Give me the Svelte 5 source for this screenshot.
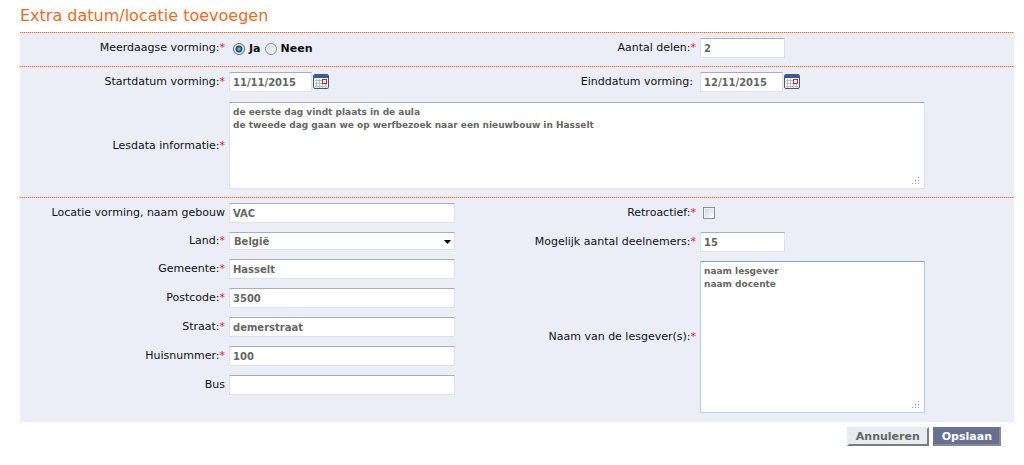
<script>
	let meerdaags = 'ja';
	let delen = '2';
	let start = '11/11/2015';
	let einde = '12/11/2015';
	let lesdata = 'de eerste dag vindt plaats in de aula\nde tweede dag gaan we op werfbezoek naar een nieuwbouw in Hasselt';
	let land = 'België';
	let retroactief = false;
	let deelnemers = '15';
	let lesgevers = 'naam lesgever\nnaam docente';

	let gebouw = 'VAC';
	let adres = [
		{ id: 'gemeente', label: 'Gemeente:', verplicht: true, waarde: 'Hasselt' },
		{ id: 'postcode', label: 'Postcode:', verplicht: true, waarde: '3500' },
		{ id: 'straat', label: 'Straat:', verplicht: true, waarde: 'demerstraat' },
		{ id: 'huisnummer', label: 'Huisnummer:', verplicht: true, waarde: '100' },
		{ id: 'bus', label: 'Bus', verplicht: false, waarde: '' }
	];
</script>

{#snippet kalender(naam)}
	<button type="button" class="kalender" aria-label={naam}>
		<svg width="16" height="16" viewBox="0 0 16 16">
			<rect x="0.5" y="0.5" width="15" height="14" rx="1.5" fill="#fff" stroke="#55525c" />
			<path d="M1 4V2q0-1 1-1h12q1 0 1 1v2z" fill="#2c5fa6" />
			<path d="M2 6.5h12M2 9.5h12M2 12.5h12M3.5 5v9M6.5 5v9M9.5 5v9M12.5 5v9" stroke="#b9bfca" fill="none" />
			<rect x="9.5" y="5.5" width="4" height="4" fill="#fff" stroke="#d8202a" />
		</svg>
	</button>
{/snippet}

{#snippet greep()}
	<svg class="greep" width="8" height="8" viewBox="0 0 8 8">
		<path d="M6 0h1v1h-1zM3 3h1v1h-1zM6 3h1v1h-1zM0 6h1v1h-1zM3 6h1v1h-1zM6 6h1v1h-1z" />
	</svg>
{/snippet}

<main>
	<h1>Extra datum/locatie toevoegen</h1>
	<form>
		<section>
			<div class="helft">
				<span class="label" id="meerdaags">Meerdaagse vorming:<i>*</i></span>
				<div class="keuze" role="radiogroup" aria-labelledby="meerdaags">
					<label><input type="radio" value="ja" bind:group={meerdaags} /> Ja</label>
					<label><input type="radio" value="neen" bind:group={meerdaags} /> Neen</label>
				</div>
			</div>
			<div class="helft">
				<label class="label" for="delen">Aantal delen:<i>*</i></label>
				<input class="kort" id="delen" type="text" bind:value={delen} />
			</div>
		</section>

		<section>
			<div class="helft">
				<label class="label" for="start">Startdatum vorming:<i>*</i></label>
				<div class="datum">
					<input class="kort" id="start" type="text" bind:value={start} />
					{@render kalender('Kies startdatum')}
				</div>
			</div>
			<div class="helft">
				<label class="label leeg" for="einde">Einddatum vorming:</label>
				<div class="datum">
					<input class="kort" id="einde" type="text" bind:value={einde} />
					{@render kalender('Kies einddatum')}
				</div>
			</div>
			<div class="breed">
				<label class="label" for="lesdata">Lesdata informatie:<i>*</i></label>
				<div class="tekst">
					<textarea id="lesdata" class="laag" bind:value={lesdata}></textarea>
					{@render greep()}
				</div>
			</div>
		</section>

		<section>
			<div class="helft">
				<label class="label" for="gebouw">Locatie vorming, naam gebouw</label>
				<input id="gebouw" type="text" bind:value={gebouw} />
				<label class="label" for="land">Land:<i>*</i></label>
				<div class="lijst">
					<select id="land" bind:value={land}>
						<option>België</option>
						<option>Nederland</option>
					</select>
					<svg class="pijl" width="7" height="4" viewBox="0 0 7 4"><path d="M0 0h7L3.5 4z" /></svg>
				</div>
				{#each adres as veld}
					<label class="label" for={veld.id}>{veld.label}{#if veld.verplicht}<i>*</i>{/if}</label>
					<input id={veld.id} type="text" bind:value={veld.waarde} />
				{/each}
			</div>
			<div class="helft">
				<label class="label" for="retroactief">Retroactief:<i>*</i></label>
				<input id="retroactief" type="checkbox" bind:checked={retroactief} />
				<label class="label" for="deelnemers">Mogelijk aantal deelnemers:<i>*</i></label>
				<input class="kort" id="deelnemers" type="text" bind:value={deelnemers} />
				<label class="label" for="lesgevers">Naam van de lesgever(s):<i>*</i></label>
				<div class="tekst smal">
					<textarea id="lesgevers" class="hoog" bind:value={lesgevers}></textarea>
					{@render greep()}
				</div>
			</div>
		</section>

		<div class="knoppen">
			<button type="button" class="knop">Annuleren</button>
			<button type="button" class="knop opslaan">Opslaan</button>
		</div>
	</form>
</main>

<style>
	:global(body) {
		background: #fff;
	}

	main {
		padding: 0 10px 0 20px;
		font: 11px/16px Verdana, "DejaVu Sans", sans-serif;
		color: #111;
	}

	h1 {
		margin: 0;
		padding: 4px 0 5px;
		font-size: 16px;
		line-height: 23px;
		font-weight: normal;
		color: #f26a21;
	}

	section {
		display: grid;
		grid-template-columns: 435fr 555fr;
		gap: 10px 4px;
		align-items: start;
		padding: 6px 0 8px;
		/* dotted line above each block */
		background: repeating-linear-gradient(90deg, #f27a38 0 1px, #f9b790 1px 2px) top / 100% 1px no-repeat #ebeef7;
	}

	section:last-of-type {
		padding-bottom: 9px;
	}

	.helft {
		display: grid;
		grid-template-columns: 205fr 226fr;
		gap: 9px 4px;
		align-items: center;
		min-height: 20px;
	}

	.helft:nth-child(2) {
		grid-template-columns: 237fr 314fr;
	}

	.breed {
		display: grid;
		grid-column: 1 / -1;
		grid-template-columns: 205fr 696fr 85fr;
		gap: 4px;
		align-items: center;
	}

	.label {
		text-align: right;
		white-space: nowrap;
	}

	.leeg {
		padding-right: 3px;
	}

	i {
		font-style: normal;
		color: #f0101c;
	}

	input[type="text"],
	select,
	textarea {
		box-sizing: border-box;
		width: 100%;
		margin: 0;
		border: 1px solid #dfe2ea;
		border-top-color: #a9adb8;
		border-radius: 1px;
		background: #fff;
		font: bold 10px/13px Verdana, "DejaVu Sans", sans-serif;
		color: #666;
	}

	input[type="text"] {
		height: 20px;
		padding: 0 3px;
	}

	input.kort {
		width: 85px;
	}

	.datum input.kort {
		width: 83px;
	}

	select {
		display: block;
		height: 18px;
		padding: 0 4px;
		appearance: none;
	}

	textarea {
		display: block;
		padding: 3px;
		resize: none;
		font-size: 9px;
	}

	.laag {
		height: 87px;
	}

	.hoog {
		height: 152px;
		border-color: #b5cfe7;
		border-top-color: #7ba3cc;
	}

	.tekst,
	.lijst {
		position: relative;
	}

	.smal {
		width: 225px;
	}

	.greep {
		position: absolute;
		right: 5px;
		bottom: 4px;
		fill: #999;
	}

	.pijl {
		position: absolute;
		right: 4px;
		top: 8px;
	}

	.keuze,
	.datum {
		display: flex;
		align-items: center;
	}

	.keuze {
		gap: 4px;
		padding: 2px 0 0 4px;
		font-weight: bold;
	}

	.datum {
		gap: 1px;
	}

	.keuze label {
		display: flex;
		align-items: center;
		gap: 4px;
	}

	input[type="radio"],
	input[type="checkbox"] {
		appearance: none;
		box-sizing: border-box;
		width: 12px;
		height: 12px;
		margin: 0;
		border: 1px solid #8e8f8f;
		background: linear-gradient(135deg, #cfd3d6, #fff);
		box-shadow: inset 0 0 0 1px #f4f4f4;
	}

	input[type="radio"] {
		border-radius: 50%;
	}

	input[type="radio"]:checked {
		border-color: #4c6a86;
		background: radial-gradient(circle, #8fd0ee 0, #17405f 3px, #dce6ee 4px);
	}

	input[type="checkbox"] {
		margin: 4px 3px;
	}

	.kalender {
		display: flex;
		padding: 0;
		border: 0;
		background: none;
	}

	.knoppen {
		display: flex;
		justify-content: flex-end;
		gap: 4px;
		padding: 5px 13px 0 0;
	}

	.knop {
		padding: 0 7px;
		border: 2px solid #e6ecf0;
		border-right-color: #7c7c7c;
		border-bottom-color: #7c7c7c;
		background: #e6ecf0;
		font: bold 11px/15px Verdana, "DejaVu Sans", sans-serif;
		color: #666;
	}

	.opslaan {
		border-color: #6b7494 #8a8a8a #8a8a8a #6b7494;
		background: #667092;
		color: #fff;
	}
</style>
